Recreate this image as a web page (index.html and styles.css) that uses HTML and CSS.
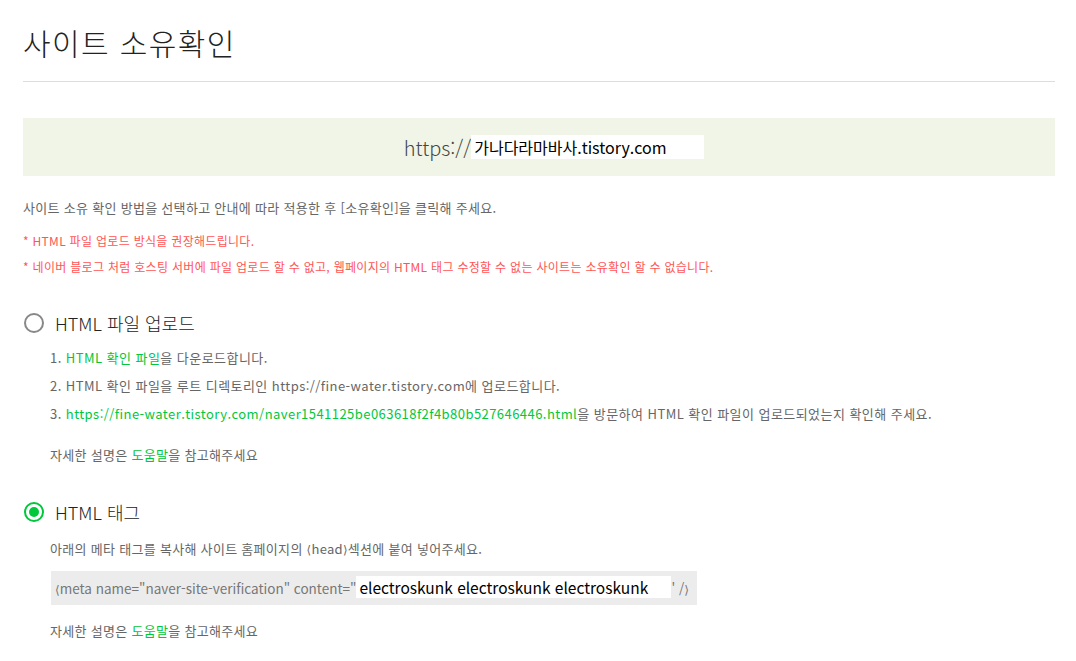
FILE: index.html
```html
<!DOCTYPE html>
<html lang="ko">
<head>
    <meta charset="UTF-8">
    <title>사이트 소유확인</title>
    <link rel="stylesheet" href="styles.css">
</head>
<body>
    <div class="page-head">
        <h1>사이트 소유확인</h1>
    </div>

    <div class="site-box">
        <span class="site-proto">https://</span><span class="site-name">가나다라마바사.tistory.com</span>
    </div>

    <p class="intro">사이트 소유 확인 방법을 선택하고 안내에 따라 적용한 후 [소유확인]을 클릭해 주세요.</p>
    <ul class="notice">
        <li>* HTML 파일 업로드 방식을 권장해드립니다.</li>
        <li>* 네이버 블로그 처럼 호스팅 서버에 파일 업로드 할 수 없고, 웹페이지의 HTML 태그 수정할 수 없는 사이트는 소유확인 할 수 없습니다.</li>
    </ul>

    <div class="option">
        <label class="option-title"><span class="radio"></span>HTML 파일 업로드</label>
        <ol class="steps">
            <li>1. <a class="green">HTML 확인 파일</a>을 다운로드합니다.</li>
            <li>2. HTML 확인 파일을 루트 디렉토리인 https://fine-water.tistory.com에 업로드합니다.</li>
            <li>3. <a class="green">https://fine-water.tistory.com/naver1541125be063618f2f4b80b527646446.html</a>을 방문하여 HTML 확인 파일이 업로드되었는지 확인해 주세요.</li>
        </ol>
        <p class="help">자세한 설명은 <a class="green">도움말</a>을 참고해주세요</p>
    </div>

    <div class="option">
        <label class="option-title"><span class="radio checked"></span>HTML 태그</label>
        <p class="desc">아래의 메타 태그를 복사해 사이트 홈페이지의 <span class="angle">⟨</span>head<span class="angle">⟩</span>섹션에 붙여 넣어주세요.</p>
        <div class="meta-code"><span class="angle">⟨</span>meta name="naver-site-verification" content="<span class="meta-key">electroskunk electroskunk electroskunk</span>' /<span class="angle">⟩</span></div>
        <p class="help help-last">자세한 설명은 <a class="green">도움말</a>을 참고해주세요</p>
    </div>
</body>
</html>
```

FILE: styles.css
```css
body {
    margin: 0;
    padding: 0 21px 0 23px;
    font-family: "Noto Sans CJK KR", "Noto Sans", sans-serif;
    color: #666;
    background: #fff;
}

.page-head {
    padding: 20px 0 17px;
    border-bottom: 1px solid #ddd;
}

.page-head h1 {
    margin: 0;
    font-size: 30px;
    font-weight: 300;
    letter-spacing: 1.4px;
    line-height: 44px;
    color: #222;
}

.site-box {
    margin-top: 36px;
    height: 58px;
    background: #f0f5e8;
    display: flex;
    align-items: center;
    justify-content: center;
    padding-left: 30px;
}

.site-proto {
    font-size: 20px;
    font-weight: 300;
    color: #444;
}

.site-name {
    background: #fff;
    color: #000;
    font-size: 16px;
    line-height: 24px;
    width: 230px;
    padding-left: 3px;
}

.intro {
    margin: 22px 0 0;
    font-size: 13px;
    letter-spacing: 0.3px;
    line-height: 20px;
}

.notice {
    list-style: none;
    margin: 10px 0 0;
    padding: 0;
    font-size: 12px;
    letter-spacing: 0.3px;
    line-height: 26px;
    color: #f55;
}

.option {
    margin-top: 28px;
}

.option-title {
    display: flex;
    align-items: center;
    gap: 11px;
    font-size: 18px;
    font-weight: 300;
    line-height: 30px;
    color: #222;
}

.radio {
    width: 16px;
    height: 16px;
    margin-left: 1px;
    border: 2px solid #888;
    border-radius: 50%;
    display: flex;
    align-items: center;
    justify-content: center;
}

.radio.checked {
    border-color: #00c73c;
}

.radio.checked::after {
    content: "";
    width: 10px;
    height: 10px;
    border-radius: 50%;
    background: #00c73c;
}

.steps {
    list-style: none;
    margin: 6px 0 0;
    padding: 0 0 0 27px;
    font-size: 13px;
    letter-spacing: 0.45px;
    line-height: 28px;
}

.green {
    color: #00c73c;
}

.help {
    margin: 13px 0 0;
    padding-left: 27px;
    font-size: 13px;
    letter-spacing: 0.3px;
    line-height: 28px;
}

.desc {
    margin: 8px 0 0;
    padding-left: 27px;
    font-size: 13px;
    letter-spacing: 0.3px;
    line-height: 28px;
}

.angle {
    font-family: "DejaVu Sans", sans-serif;
    font-size: 0.9em;
}

.meta-code {
    display: inline-block;
    margin: 7px 0 0 28px;
    padding: 5px 8px 4px 4px;
    background: #ececec;
    font-size: 13.5px;
    line-height: 22px;
    color: #777;
}

.meta-key {
    display: inline-block;
    width: 312px;
    padding-left: 3px;
    background: #fff;
    color: #000;
    font-size: 15.5px;
}

.help-last {
    margin-top: 12px;
}
```
